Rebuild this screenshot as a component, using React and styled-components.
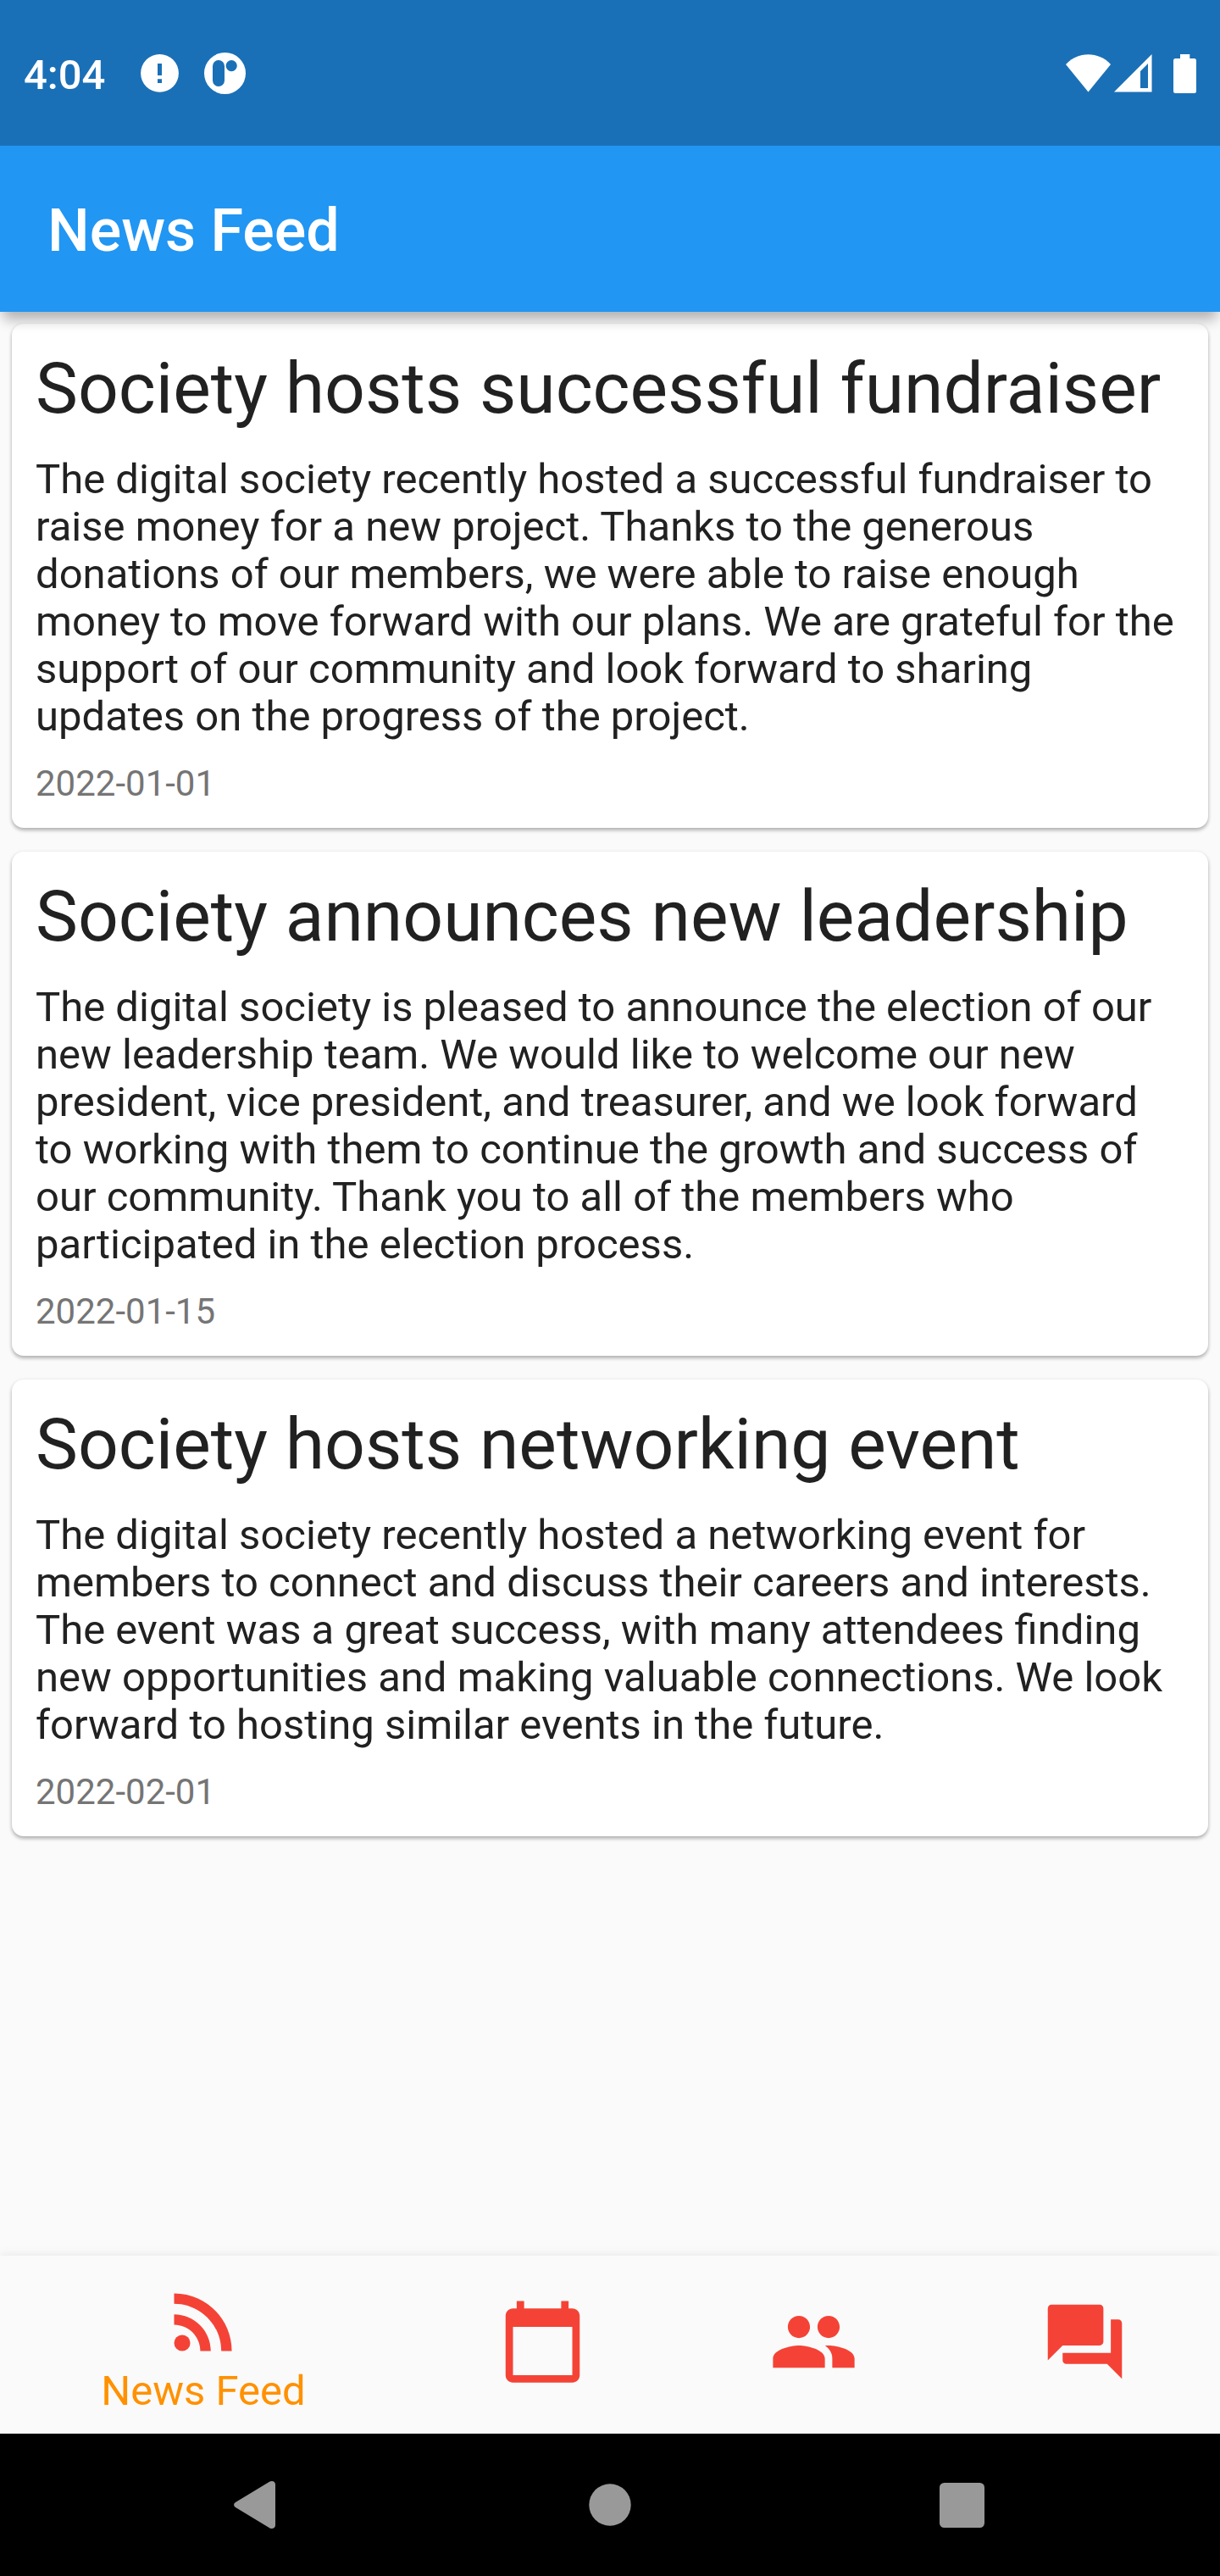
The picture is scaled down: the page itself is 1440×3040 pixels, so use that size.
import React from "react";
import styled, { createGlobalStyle } from "styled-components";
import { MdRssFeed, MdCalendarToday, MdPeople, MdForum } from "react-icons/md";

const GlobalStyle = createGlobalStyle`
  *, *::before, *::after { box-sizing: border-box; }
  body { margin: 0; background: #fafafa; }
  h1, h2, p { margin: 0; font-weight: 400; }
`;

const Screen = styled.div`
  width: 1440px;
  height: 3040px;
  display: flex;
  flex-direction: column;
  overflow: hidden;
  background: #fafafa;
  color: #212121;
  font-family: Roboto, "Noto Sans", sans-serif;
`;

const StatusBar = styled.div`
  flex: none;
  display: flex;
  align-items: flex-start;
  justify-content: space-between;
  height: 172px;
  padding: 60px 28px 0;
  background: #1a70b7;
  color: #fff;
  z-index: 2;
`;

const StatusGroup = styled.div`
  display: flex;
  align-items: center;
  height: 53px;
`;

const Clock = styled.span`
  width: 138px;
  padding-top: 4px;
  font-size: 49px;
  font-weight: 500;
  line-height: 57px;
`;

const StatusIcon = styled.svg`
  display: block;
  flex: none;
  width: ${(p) => p.$width}px;
  height: ${(p) => p.$height}px;
  margin-left: ${(p) => p.$gap || 0}px;
  fill: currentColor;
`;

const AppBar = styled.header`
  flex: none;
  display: flex;
  align-items: center;
  height: 196px;
  padding: 4px 56px 0;
  background: #2196f3;
  color: #fff;
  z-index: 1;
  box-shadow:
    0 15px 14px -5px rgba(0, 0, 0, 0.22),
    0 3px 18px 0 rgba(0, 0, 0, 0.12);
`;

const AppTitle = styled.h1`
  font-size: 70px;
  font-weight: 500;
  line-height: 82px;
`;

const Feed = styled.main`
  flex: 1;
  min-height: 0;
  display: flex;
  flex-direction: column;
  gap: 28px;
  padding: 14px;
`;

const Card = styled.article`
  display: flex;
  flex-direction: column;
  gap: 28px;
  padding: 28px;
  border-radius: 14px;
  background: #fff;
  box-shadow:
    0 3px 4px 0 rgba(0, 0, 0, 0.24),
    0 1px 5px 0 rgba(0, 0, 0, 0.1);
`;

const Headline = styled.h2`
  font-size: 84px;
  line-height: 98px;
  white-space: nowrap;
`;

const Story = styled.p`
  && { margin: 2px 0 -2px; }
  font-size: 49px;
  line-height: 56px;
  white-space: pre;
`;

const Dateline = styled.p`
  color: #757575;
  font-size: 42px;
  line-height: 49px;
`;

const BottomBar = styled.nav`
  flex: none;
  display: flex;
  height: 210px;
  background: #fafafa;
  box-shadow: 0 -3px 10px rgba(0, 0, 0, 0.06);
`;

const Tab = styled.div`
  flex: ${(p) => (p.$active ? 3 : 2)} 1 0;
  display: flex;
  flex-direction: column;
  align-items: center;
  padding-top: ${(p) => (p.$active ? 24.5 : 48.5)}px;
  color: #f44336;

  svg { display: block; flex: none; }
`;

const TabLabel = styled.span`
  padding-top: 1.5px;
  color: #ff9100;
  font-size: 49px;
  line-height: 57px;
`;

const SystemBar = styled.div`
  flex: none;
  display: flex;
  align-items: center;
  justify-content: center;
  height: 168px;
  background: #000;
  color: #999;
`;

const SystemButton = styled.div`
  display: flex;
  justify-content: center;
  width: 415px;

  svg { display: block; fill: currentColor; }
`;

const stories = [
  {
    title: "Society hosts successful fundraiser",
    body: "The digital society recently hosted a successful fundraiser to\nraise money for a new project. Thanks to the generous\ndonations of our members, we were able to raise enough\nmoney to move forward with our plans. We are grateful for the\nsupport of our community and look forward to sharing\nupdates on the progress of the project.",
    date: "2022-01-01",
  },
  {
    title: "Society announces new leadership",
    body: "The digital society is pleased to announce the election of our\nnew leadership team. We would like to welcome our new\npresident, vice president, and treasurer, and we look forward\nto working with them to continue the growth and success of\nour community. Thank you to all of the members who\nparticipated in the election process.",
    date: "2022-01-15",
  },
  {
    title: "Society hosts networking event",
    body: "The digital society recently hosted a networking event for\nmembers to connect and discuss their careers and interests.\nThe event was a great success, with many attendees finding\nnew opportunities and making valuable connections. We look\nforward to hosting similar events in the future.",
    date: "2022-02-01",
  },
];

const tabs = [
  { icon: MdRssFeed, label: "News Feed" },
  { icon: MdCalendarToday },
  { icon: MdPeople },
  { icon: MdForum },
];

export default function App() {
  return (
    <Screen>
      <GlobalStyle />
      <StatusBar>
        <StatusGroup>
          <Clock>4:04</Clock>
          <StatusIcon $width={45} $height={45} viewBox="0 0 45 45">
            <path
              fillRule="evenodd"
              d="M22.5 0a22.4 22.4 0 1 0 0 44.8a22.4 22.4 0 1 0 0-44.8zM20 11h5v14h-5zM20 29.3h5v4.7h-5z"
            />
          </StatusIcon>
          <StatusIcon $width={49} $height={49} $gap={30} viewBox="0 0 49 49">
            <path
              fillRule="evenodd"
              d="M24.5 0a24.5 24.5 0 1 0 0 49a24.5 24.5 0 1 0 0-49zM10 16a7 7 0 0 1 14 0v17a7 7 0 0 1-14 0zM32.2 9a6.6 6.6 0 1 0 0 13.2a6.6 6.6 0 1 0 0-13.2z"
            />
          </StatusIcon>
        </StatusGroup>
        <StatusGroup>
          <StatusIcon $width={53} $height={45} viewBox="0 0 53 45">
            <path d="M0 12C14-3.7 39-3.7 53 12L26.5 44.5z" />
          </StatusIcon>
          <StatusIcon $width={45} $height={45} $gap={4} viewBox="0 0 45 45">
            <path fillRule="evenodd" d="M0 44.5L44.5 0v44.5zM31 20v20h9V11z" />
          </StatusIcon>
          <StatusIcon $width={27} $height={46} $gap={25} viewBox="0 0 27 46">
            <path d="M8 0h11.3v5h5.2a2.5 2.5 0 0 1 2.5 2.5v36a2.5 2.5 0 0 1-2.5 2.5h-22A2.5 2.5 0 0 1 0 43.5v-36A2.5 2.5 0 0 1 2.5 5H8z" />
          </StatusIcon>
        </StatusGroup>
      </StatusBar>
      <AppBar>
        <AppTitle>News Feed</AppTitle>
      </AppBar>
      <Feed>
        {stories.map((story) => (
          <Card key={story.date}>
            <Headline>{story.title}</Headline>
            <Story>{story.body}</Story>
            <Dateline>{story.date}</Dateline>
          </Card>
        ))}
      </Feed>
      <BottomBar>
        {tabs.map(({ icon: Icon, label }, i) => (
          <Tab key={i} $active={Boolean(label)}>
            <Icon size={105} />
            {label && <TabLabel>{label}</TabLabel>}
          </Tab>
        ))}
      </BottomBar>
      <SystemBar>
        <SystemButton>
          <svg width="58" height="58" viewBox="0 0 58 58">
            <path d="M42.5 1.5C45.5 0 49 1.5 49 5V53C49 56.5 45.5 58 42.5 56.5L2 32C-0.5 30.5 -0.5 27.5 2 26z" />
          </svg>
        </SystemButton>
        <SystemButton>
          <svg width="50" height="50" viewBox="0 0 50 50">
            <circle cx="25" cy="25" r="24.7" />
          </svg>
        </SystemButton>
        <SystemButton>
          <svg width="53" height="53" viewBox="0 0 53 53">
            <rect width="53" height="53" rx="5.5" />
          </svg>
        </SystemButton>
      </SystemBar>
    </Screen>
  );
}
